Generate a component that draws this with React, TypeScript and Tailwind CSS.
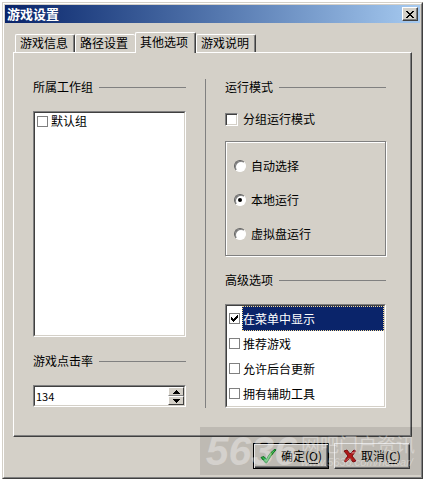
import React, { useState } from 'react';

const TABS = ['游戏信息', '路径设置', '其他选项', '游戏说明'];
const RUN_MODES = ['自动选择', '本地运行', '虚拟盘运行'];
const ADVANCED = ['在菜单中显示', '推荐游戏', '允许后台更新', '拥有辅助工具'];

const sunken =
  'bg-white border border-t-[#808080] border-l-[#808080] border-r-white border-b-white';
const sunkenInner =
  'border border-t-[#404040] border-l-[#404040] border-r-[#d4d0c8] border-b-[#d4d0c8]';

interface CheckProps {
  label: string;
  checked: boolean;
  onChange: (checked: boolean) => void;
  variant?: 'flat' | 'sunken';
}

// Tick box drawn over a real input, flat inside lists and sunken elsewhere
const CheckBox: React.FC<CheckProps> = ({ label, checked, onChange, variant = 'flat' }) => (
  <span className="relative block shrink-0">
    <input
      type="checkbox"
      aria-label={label}
      checked={checked}
      onChange={(e) => onChange(e.target.checked)}
      className={
        variant === 'flat'
          ? 'block w-[11px] h-[11px] appearance-none bg-white border border-[#808080]'
          : 'block w-[13px] h-[13px] appearance-none bg-white border border-t-[#808080] border-l-[#808080] border-r-white border-b-white shadow-[inset_1px_1px_0_#404040,inset_-1px_-1px_0_#d4d0c8]'
      }
    />
    {checked && (
      <svg viewBox="0 0 11 11" className="absolute inset-0 w-full h-full pointer-events-none" shapeRendering="crispEdges">
        <path d="M2 4h1v1h1v1h1v-1h1v-1h1v-1h1v-1h1v3h-1v1h-1v1h-1v1h-1v1h-1v-1h-1v-1h-1z" fill="#000" />
      </svg>
    )}
  </span>
);

const SectionTitle: React.FC<{ children: React.ReactNode }> = ({ children }) => (
  <div className="flex items-center gap-[6px] h-4">
    <h2 className="leading-4 whitespace-nowrap">{children}</h2>
    <div className="h-px flex-1 bg-[#808080]" />
  </div>
);

interface DialogButtonProps {
  label: string;
  hotkey: string;
  isDefault?: boolean;
  children: React.ReactNode;
}

const DialogButton: React.FC<DialogButtonProps> = ({ label, hotkey, isDefault, children }) => (
  <button
    className={`w-[76px] h-[26px] flex items-center justify-center gap-1 whitespace-nowrap bg-[#d4d0c8] border ${
      isDefault
        ? 'border-black shadow-[inset_1px_1px_0_#fff,inset_-1px_-1px_0_#404040,inset_-2px_-2px_0_#808080]'
        : 'border-t-white border-l-white border-r-[#404040] border-b-[#404040] shadow-[inset_-1px_-1px_0_#808080]'
    }`}
  >
    {children}
    <span>
      {label}(<u className="underline-offset-2">{hotkey}</u>)
    </span>
  </button>
);

const Watermark = () => (
  <div
    aria-hidden="true"
    className="absolute right-0 bottom-[2px] h-[48px] bg-black/10 text-white/35 pointer-events-none flex items-center pl-[6px] pr-[6px] gap-1 z-10"
  >
    <span className="text-[41px] leading-[48px] font-bold italic font-['Liberation_Sans',sans-serif]">
      5636
    </span>
    <div className="whitespace-nowrap">
      <div className="text-[19px] leading-[22px]">网吧门户资讯</div>
      <div className="text-[11px] leading-[14px] italic font-['Liberation_Sans',sans-serif]">www.5636.com/netbar/</div>
    </div>
  </div>
);

export default function App() {
  const [tab, setTab] = useState(2);
  const [inGroup, setInGroup] = useState(false);
  const [grouped, setGrouped] = useState(false);
  const [mode, setMode] = useState(1);
  const [advanced, setAdvanced] = useState([true, false, false, false]);
  const [selected, setSelected] = useState(0);
  const [hits, setHits] = useState('134');

  const toggleAdvanced = (index: number, value: boolean) => {
    setAdvanced(advanced.map((v, i) => (i === index ? value : v)));
    setSelected(index);
  };

  const stepHits = (delta: number) => setHits(String(Math.max(0, (parseInt(hits, 10) || 0) + delta)));

  return (
    <div className="p-[2px] bg-white text-black text-[12px] leading-4 font-['Noto_Sans_CJK_SC',sans-serif]">
      <div className="border border-t-[#d4d0c8] border-l-[#d4d0c8] border-r-[#404040] border-b-[#404040]">
        <div className="relative bg-[#d4d0c8] border border-t-white border-l-white border-r-[#808080] border-b-[#808080] p-px pb-2">
          {/* Title bar */}
          <header className="h-[18px] flex items-center justify-between pl-[2px] pr-[2px] bg-gradient-to-r from-[#0a246a] to-[#a6caf0]">
            <h1 className="text-white font-bold text-[13px] leading-[18px]">游戏设置</h1>
            <button
              aria-label="关闭"
              className="w-4 h-[14px] flex items-center justify-center bg-[#d4d0c8] border border-t-white border-l-white border-r-[#404040] border-b-[#404040] shadow-[inset_-1px_-1px_0_#808080]"
            >
              <svg viewBox="0 0 8 7" className="w-2 h-[7px]" shapeRendering="crispEdges">
                <path
                  d="M0 0h2v1h1v1h2v-1h1v-1h2v1h-1v1h-1v1h-1v1h1v1h1v1h1v1h-2v-1h-1v-1h-2v1h-1v1h-2v-1h1v-1h1v-1h1v-1h-1v-1h-1v-1h-1z"
                  fill="#000"
                />
              </svg>
            </button>
          </header>

          <main className="px-2 pt-[9px]">
            {/* Tab strip */}
            <div role="tablist" className="flex items-end pl-[2px] h-5">
              {TABS.map((name, i) => (
                <button
                  key={name}
                  role="tab"
                  aria-selected={tab === i}
                  onClick={() => setTab(i)}
                  className={`whitespace-nowrap text-left pl-1 bg-[#d4d0c8] border-t border-l border-t-white border-l-white rounded-t-[2px] ${
                    tab === i ? 'relative z-10 w-[61px] h-[21px] -mb-px pb-[2px]' : 'w-[60px] h-[18px] pb-px'
                  } ${
                    tab === i + 1 ? '' : 'border-r border-r-[#404040] shadow-[inset_-1px_0_0_#808080]'
                  }`}
                >
                  {name}
                </button>
              ))}
            </div>

            {/* Tab page */}
            <div className="flex border border-t-white border-l-white border-r-[#404040] border-b-[#404040] shadow-[inset_-1px_-1px_0_#808080] pt-[26px] pb-7 pl-[19px] pr-[25px]">
              <div className="flex-[153] min-w-0 flex flex-col">
                <SectionTitle>所属工作组</SectionTitle>
                <div className={`mt-4 ${sunken}`}>
                  <div className={`h-[224px] ${sunkenInner}`}>
                    <label className="flex items-center gap-[3px] h-4 pl-[2px]">
                      <CheckBox label="默认组" checked={inGroup} onChange={setInGroup} />
                      默认组
                    </label>
                  </div>
                </div>
                <div className="mt-4">
                  <SectionTitle>游戏点击率</SectionTitle>
                </div>
                <div className={`mt-4 ${sunken}`}>
                  <div className={`h-5 flex ${sunkenInner}`}>
                    <input
                      type="text"
                      aria-label="游戏点击率"
                      value={hits}
                      onChange={(e) => setHits(e.target.value)}
                      className="flex-1 min-w-0 px-px text-[11px] outline-none"
                    />
                    <div className="w-4 flex flex-col">
                      <button
                        aria-label="增加"
                        onClick={() => stepHits(1)}
                        className="flex-1 flex items-center justify-center bg-[#d4d0c8] border border-t-white border-l-white border-r-[#404040] border-b-[#808080]"
                      >
                        <svg viewBox="0 0 7 4" className="w-[7px] h-1" shapeRendering="crispEdges">
                          <path d="M3 0h1v1h1v1h1v1h1v1h-7v-1h1v-1h1v-1h1z" />
                        </svg>
                      </button>
                      <button
                        aria-label="减少"
                        onClick={() => stepHits(-1)}
                        className="flex-1 flex items-center justify-center bg-[#d4d0c8] border border-t-white border-l-white border-r-[#404040] border-b-[#404040]"
                      >
                        <svg viewBox="0 0 7 4" className="w-[7px] h-1" shapeRendering="crispEdges">
                          <path d="M0 0h7v1h-1v1h-1v1h-1v1h-1v-1h-1v-1h-1v-1h-1z" />
                        </svg>
                      </button>
                    </div>
                  </div>
                </div>
              </div>

              <div className="w-px mx-[19px] bg-[#808080]" />

              <div className="flex-[161] min-w-0 flex flex-col">
                <SectionTitle>运行模式</SectionTitle>
                <label className="mt-4 flex items-center gap-[5px] h-4">
                  <CheckBox label="分组运行模式" variant="sunken" checked={grouped} onChange={setGrouped} />
                  分组运行模式
                </label>

                <div
                  role="radiogroup"
                  aria-label="运行模式"
                  className="mt-[14px] border border-[#808080] shadow-[inset_1px_1px_0_#fff,1px_1px_0_#fff] pt-4 pb-[13px] pl-2 flex flex-col gap-[18px]"
                >
                  {RUN_MODES.map((name, i) => (
                    <label key={name} className="flex items-center gap-[5px] h-4">
                      <span className="relative block w-3 h-3">
                        <input
                          type="radio"
                          name="mode"
                          checked={mode === i}
                          onChange={() => setMode(i)}
                          className="block w-3 h-3 appearance-none rounded-full bg-white border border-t-[#606060] border-l-[#606060] border-r-white border-b-white shadow-[inset_1px_1px_0_#808080]"
                        />
                        {mode === i && (
                          <span className="absolute inset-1 rounded-full bg-black pointer-events-none" />
                        )}
                      </span>
                      {name}
                    </label>
                  ))}
                </div>

                <div className="mt-4">
                  <SectionTitle>高级选项</SectionTitle>
                </div>
                <div className={`mt-4 ${sunken}`}>
                  <div className={sunkenInner}>
                    {ADVANCED.map((name, i) => (
                      <label key={name} className="flex items-center h-[25px] pl-[2px] gap-[2px]">
                        <CheckBox
                          label={name}
                          checked={advanced[i]}
                          onChange={(value) => toggleAdvanced(i, value)}
                        />
                        <span
                          className={`flex-1 h-full flex items-center border border-dotted ${
                            selected === i ? 'bg-[#0a246a] text-white border-[#f5db95]' : 'border-transparent'
                          }`}
                        >
                          {name}
                        </span>
                      </label>
                    ))}
                  </div>
                </div>
              </div>
            </div>
          </main>

          <footer className="flex justify-end gap-[5px] pt-[6px] pr-[10px]">
            <DialogButton label="确定" hotkey="O" isDefault>
              <svg viewBox="0 0 18 16" className="w-[17px] h-[15px]">
                <path d="M1 9L4 8L7 11C9 6 12 3 16 0L17 1C13 5 10 10 7 15H6Z" fill="#22b03a" stroke="#0d7a26" />
                <path d="M3 9L7 13C9 8 12 4 15 2" fill="none" stroke="#63dc70" />
              </svg>
            </DialogButton>
            <DialogButton label="取消" hotkey="C">
              <svg viewBox="0 0 14 14" className="w-[14px] h-[14px]">
                <path d="M1 2L4 1L7 5L11 1L13 2L9 7L13 12L10 13L7 9L3 13L1 12L5 7Z" fill="#c41e1e" stroke="#8a1010" />
              </svg>
            </DialogButton>
          </footer>

          <Watermark />
        </div>
      </div>
    </div>
  );
}
